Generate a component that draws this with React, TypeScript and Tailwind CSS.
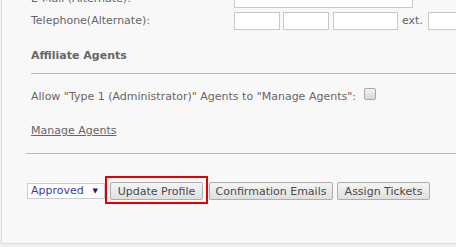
const font = { fontFamily: '"DejaVu Sans", Verdana, sans-serif' };

function Field({ w }: { w: string }) {
  return <div className={`${w} h-[18px] shrink-0 border border-[#c8c8c8] bg-white`} />;
}

function Btn({ label, w, className = '' }: { label: string; w: string; className?: string }) {
  return (
    <button
      className={`${w} ${className} block h-[18px] shrink-0 rounded-[2px] border border-[#adadad] bg-gradient-to-b from-[#f5f5f5] to-[#dfdfdf] text-[11px] leading-none text-[#4a4a4a] text-center`}
    >
      {label}
    </button>
  );
}

export default function App() {
  return (
    <div className="w-[456px] h-[247px] overflow-hidden bg-[#f0f0f0]" style={font}>
      <div className="ml-px h-[244px] overflow-hidden border-l border-b border-[#dcdcdc] bg-[#f8f8f8]">
        {/* alternate contact fields */}
        <div className="-mt-[10px] pl-[29px] flex flex-col gap-[4px] text-[11px] text-[#666]">
          <div className="flex items-center h-[18px]">
            <span className="w-[203px] shrink-0">E-Mail (Alternate):</span>
            <Field w="w-[179px]" />
          </div>
          <div className="flex items-center h-[18px]">
            <span className="w-[203px] shrink-0">Telephone(Alternate):</span>
            <div className="flex items-center">
              <Field w="w-[46px]" />
              <div className="ml-[3px]"><Field w="w-[46px]" /></div>
              <div className="ml-[4px]"><Field w="w-[65px]" /></div>
              <span className="ml-[4px] mr-[5px] leading-[16px]">ext.</span>
              <Field w="w-[60px]" />
            </div>
          </div>
        </div>

        {/* affiliate agents */}
        <div className="ml-[29px] mt-[18px] h-[26px] border-b border-[#bbb]">
          <h3 className="text-[11px] font-bold text-[#666] leading-[16px]">Affiliate Agents</h3>
        </div>
        <div className="pl-[29px] mt-[15px] flex items-start h-[16px] text-[11px] leading-[16px] text-[#666]">
          <span>Allow "Type 1 (Administrator)" Agents to "Manage Agents":</span>
          <span className="ml-[8px] -mt-[1px] w-[12px] h-[12px] shrink-0 rounded-[2px] border border-[#a8a8a8] bg-gradient-to-b from-[#f2f2f2] to-[#d8d8d8]" />
        </div>
        <div className="pl-[29px] mt-[16px] h-[16px] leading-[16px]">
          <a className="text-[11px] text-[#666] underline">Manage Agents</a>
        </div>

        <div className="ml-[24px] mt-[16px] h-px bg-[#bbb]" />

        {/* actions */}
        <div className="pl-[25px] mt-[22px] flex items-start">
          <div className="mt-[7px] w-[78px] h-[16px] shrink-0 border border-[#ccc] bg-white flex items-center justify-between pl-[3px] pr-[6px] text-[11px] text-[#3b3ba5]">
            <span>Approved</span>
            <span className="text-[7px] text-[#1a1a6e]">▼</span>
          </div>
          <div className="w-[103px] h-[28px] shrink-0 border-2 border-[#e50000] pl-[3px] pt-[4px] flex items-start">
            <Btn label="Update Profile" w="w-[93px]" />
          </div>
          <Btn label="Confirmation Emails" w="w-[124px]" className="mt-[6px] ml-[1px]" />
          <Btn label="Assign Tickets" w="w-[93px]" className="mt-[6px] ml-[4px]" />
        </div>
      </div>
    </div>
  );
}
